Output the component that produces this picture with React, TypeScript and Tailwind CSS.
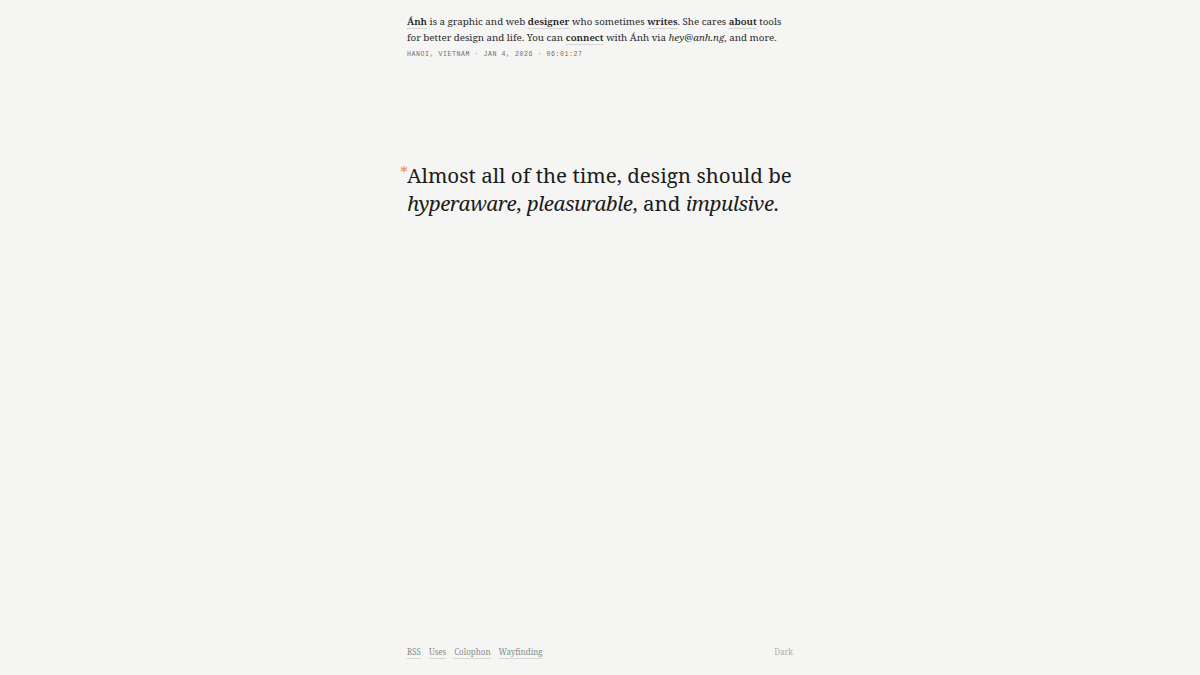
export default function App() {
  const serif = { fontFamily: '"Noto Serif", "Liberation Serif", serif' };
  const link = "font-semibold text-[#1c1c1c] underline decoration-[#d6d6d2] decoration-1 underline-offset-[3px]";
  const em = "italic tracking-[-0.5px]";
  return (
    <div className="min-h-screen bg-[#f5f5f3] text-[#2a2a2a]" style={serif}>
      <div className="mx-auto flex min-h-screen w-[386px] flex-col pt-[14px] pb-[17px]">
        <header>
          <p className="text-[9.75px] leading-[16px]">
            <span className={link}>Ánh</span> is a graphic and web{" "}
            <span className={link}>designer</span> who sometimes{" "}
            <span className={link}>writes</span>. She cares{" "}
            <span className={link}>about</span> tools for better design and life. You can{" "}
            <span className={link}>connect</span> with Ánh via <i>hey@anh.ng</i>, and more.
          </p>
          <p className="mt-[4px] text-[6.5px] leading-[10px] tracking-[0.6px] text-[#6e6e6e] font-['Liberation_Mono',monospace] uppercase">
            Hanoi, Vietnam · Jan 4, 2026 · 06:01:27
          </p>
        </header>
        <main className="mt-[101px]">
          <h1 className="relative text-[20.6px] leading-[28px] text-[#1c1c1c]">
            <span className="absolute -left-[7px] top-[4px] text-[16px] leading-none text-[#ee8a5c]">*</span>
            Almost all of the time, design should be <span className={em}>hyperaware</span>,{" "}
            <span className={em}>pleasurable</span>, and <span className={em}>impulsive</span>.
          </h1>
        </main>
        <footer className="mt-auto flex items-center justify-between text-[8px] leading-[12px] text-[#8a8a8a]">
          <nav className="flex gap-[8px]">
            {["RSS", "Uses", "Colophon", "Wayfinding"].map((t) => (
              <span key={t} className="underline decoration-[#d6d6d2] decoration-1 underline-offset-[3px]">
                {t}
              </span>
            ))}
          </nav>
          <span className="text-[#b0b0ac]">Dark</span>
        </footer>
      </div>
    </div>
  );
}
